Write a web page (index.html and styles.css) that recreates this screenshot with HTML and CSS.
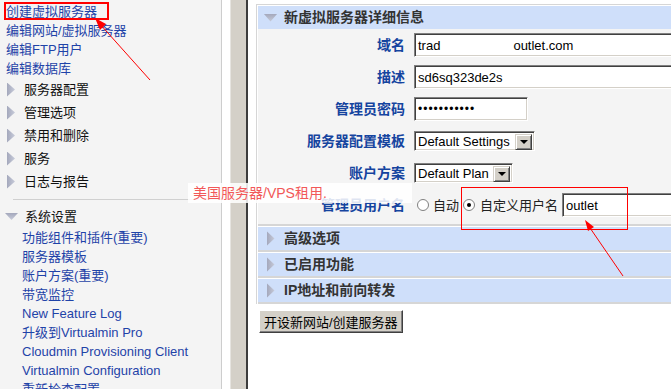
FILE: index.html
```html
<!DOCTYPE html>
<html lang="zh-CN">

<head>
  <meta charset="UTF-8">
  <meta name="viewport" content="width=device-width, initial-scale=1.0">
  <title>Virtualmin</title>
  <link rel="stylesheet" href="styles.css">
</head>

<body>
  <div class="frame">
    <div class="sidebar">
      <div class="links">
        <a href="#">创建虚拟服务器</a>
        <a href="#">编辑网站/虚拟服务器</a>
        <a href="#">编辑FTP用户</a>
        <a href="#">编辑数据库</a>
      </div>
      <ul class="cats">
        <li><span class="tri-r"></span>服务器配置</li>
        <li><span class="tri-r"></span>管理选项</li>
        <li><span class="tri-r"></span>禁用和删除</li>
        <li><span class="tri-r"></span>服务</li>
        <li><span class="tri-r"></span>日志与报告</li>
      </ul>
      <div class="sep"></div>
      <div class="cat-open"><span class="tri-d"></span>系统设置</div>
      <div class="sublinks">
        <a href="#">功能组件和插件(重要)</a>
        <a href="#">服务器模板</a>
        <a href="#">账户方案(重要)</a>
        <a href="#">带宽监控</a>
        <a href="#">New Feature Log</a>
        <a href="#">升级到Virtualmin Pro</a>
        <a href="#">Cloudmin Provisioning Client</a>
        <a href="#">Virtualmin Configuration</a>
        <a href="#">重新检查配置</a>
      </div>
    </div>
    <div class="gutter"></div>
    <div class="splitter"></div>
    <div class="main">
      <div class="panel">
        <div class="sec">
          <div class="sec-head"><span class="ico"><span class="tri-d big"></span></span>新虚拟服务器详细信息</div>
          <div class="sec-body">
            <div class="row">
              <label>域名</label>
              <div class="field wide">trad<span class="hidden-part"></span>outlet.com</div>
            </div>
            <div class="row">
              <label>描述</label>
              <div class="field wide">sd6sq323de2s</div>
            </div>
            <div class="row">
              <label>管理员密码</label>
              <div class="field pass">•••••••••••</div>
            </div>
            <div class="row">
              <label>服务器配置模板</label>
              <div class="select sel-tpl">Default Settings<span class="drop"></span></div>
            </div>
            <div class="row">
              <label>账户方案</label>
              <div class="select sel-plan">Default Plan<span class="drop"></span></div>
            </div>
            <div class="row">
              <label>管理员用户名</label>
              <span class="radio first"></span>
              <span class="opt">自动</span>
              <span class="radio on"></span>
              <span class="opt">自定义用户名</span>
              <div class="field user">outlet</div>
            </div>
          </div>
        </div>
        <div class="sec">
          <div class="sec-head"><span class="ico"><span class="tri-r big"></span></span>高级选项</div>
        </div>
        <div class="sec">
          <div class="sec-head"><span class="ico"><span class="tri-r big"></span></span>已启用功能</div>
        </div>
        <div class="sec">
          <div class="sec-head"><span class="ico"><span class="tri-r big"></span></span>IP地址和前向转发</div>
        </div>
      </div>
      <button class="btn">开设新网站/创建服务器</button>
    </div>
  </div>

  <!-- 截图上的标注 -->
  <div class="watermark">美国服务器/VPS租用.</div>
  <div class="mark mark-1"></div>
  <div class="mark mark-2"></div>
  <svg class="arrows" width="671" height="389" viewBox="0 0 671 389">
    <line x1="150" y1="80" x2="99" y2="23" />
    <polygon points="95,18 106,24 100,30" />
    <line x1="623" y1="276" x2="588" y2="225" />
    <polygon points="585,220 594,227 588,231" />
  </svg>
</body>

</html>
```

FILE: styles.css
```css
* {
  padding: 0;
  margin: 0;
  box-sizing: border-box;
}

body {
  width: 671px;
  height: 389px;
  overflow: hidden;
  position: relative;
  background: #fff;
  font: 13px/19px "Liberation Sans", "Noto Sans CJK SC", sans-serif;
  color: #111;
}

a {
  color: #1f43a8;
  text-decoration: none;
  display: block;
}

.frame {
  display: flex;
  height: 389px;
}

/* 左侧菜单 */
.sidebar {
  width: 222px;
  flex: none;
  background: #f4f4f4;
  border-right: 1px solid #cdcdcd;
  padding-top: 2px;
}

.links {
  padding-left: 6px;
}

.cats {
  list-style: none;
}

.cats li {
  height: 23px;
  display: flex;
  align-items: center;
  padding-left: 7px;
}

.tri-r {
  display: inline-block;
  width: 8px;
  height: 14px;
  margin-right: 9px;
  clip-path: polygon(0 0, 100% 50%, 0 100%);
  background: linear-gradient(90deg, #a4a8bc, #c8ccda);
}

.tri-d {
  display: inline-block;
  width: 13px;
  height: 7px;
  margin-right: 7px;
  clip-path: polygon(0 0, 100% 0, 50% 100%);
  background: linear-gradient(#a4a8bc, #c8ccda);
}

.sep {
  height: 1px;
  background: #d0d0d0;
  margin: 6px 0 5px 13px;
}

.cat-open {
  height: 23px;
  display: flex;
  align-items: center;
  padding-left: 5px;
}

.sublinks {
  padding-left: 22px;
}

.gutter {
  width: 8px;
  flex: none;
}

.splitter {
  width: 18px;
  flex: none;
  background: #d4d0c8;
  border-left: 1px solid #e6e4e0;
  border-right: 2px solid #3c3c3c;
}

/* 右侧表单 */
.main {
  flex: 1;
  min-width: 0;
  overflow: hidden;
  padding: 4px 0 0 8px;
}

.panel {
  width: 520px;
  border: 1px solid #d6d6d6;
  border-bottom: none;
  border-right: none;
  padding: 1px 0 0 1px;
}

.sec {
  border-bottom: 2px solid #d6d6d6;
  margin-bottom: 1px;
}

.sec:last-child {
  margin-bottom: 0;
}

.sec-head {
  height: 23px;
  background: #cfdffa;
  display: flex;
  align-items: center;
  font-weight: bold;
  font-size: 14px;
  color: #333;
}

.sec-head .ico {
  width: 25px;
  display: flex;
  justify-content: center;
  margin-right: 1px;
}

.tri-d.big {
  width: 14px;
  height: 8px;
  margin: 0;
}

.tri-r.big {
  width: 8px;
  height: 15px;
  margin: 0;
}

.sec-body {
  background: #f4f4f4;
  padding-bottom: 3px;
}

.row {
  height: 32px;
  display: flex;
  align-items: center;
}

.row label {
  width: 147px;
  margin-right: 9px;
  text-align: right;
  font-weight: bold;
  font-size: 14px;
  color: #15449f;
}

.field,
.select {
  background: #fff;
  border: 1px solid;
  border-color: #808080 #fff #fff #808080;
  box-shadow: inset 1px 1px #404040, inset -1px -1px #d4d0c8;
  display: flex;
  align-items: center;
  padding: 0 3px;
  white-space: nowrap;
  color: #000;
}

.field {
  height: 24px;
}

.wide {
  width: 300px;
}

.hidden-part {
  display: inline-block;
  width: 73px;
}

.pass {
  width: 114px;
  letter-spacing: 1px;
  font-size: 12px;
}

.select {
  height: 20px;
  position: relative;
  padding-right: 20px;
}

.sel-tpl {
  width: 121px;
}

.sel-plan {
  width: 99px;
}

.drop {
  position: absolute;
  right: 2px;
  top: 2px;
  width: 17px;
  height: 16px;
  background: #d4d0c8;
  border: 1px solid;
  border-color: #d4d0c8 #404040 #404040 #d4d0c8;
  box-shadow: inset 1px 1px #fff, inset -1px -1px #808080;
}

.drop::after {
  content: "";
  position: absolute;
  left: 4px;
  top: 5px;
  border-top: 4px solid #000;
  border-left: 4px solid transparent;
  border-right: 4px solid transparent;
}

.radio {
  width: 12px;
  height: 12px;
  border-radius: 50%;
  background: #fff;
  border: 1px solid #808080;
  position: relative;
  margin-right: 4px;
}

.radio.first {
  margin-left: 3px;
}

.radio.on::after {
  content: "";
  position: absolute;
  left: 3px;
  top: 3px;
  width: 4px;
  height: 4px;
  border-radius: 50%;
  background: #000;
}

.opt {
  margin-right: 4px;
  color: #222;
}

.opt + .radio {
  margin-right: 5px;
}

.user {
  width: 200px;
}

.btn {
  margin: 6px 0 0 3px;
  height: 23px;
  padding: 0 4px;
  font: 13px "Liberation Sans", "Noto Sans CJK SC", sans-serif;
  color: #000;
  background: #d4d0c8;
  border: 1px solid;
  border-color: #fff #404040 #404040 #fff;
  box-shadow: inset -1px -1px #808080;
}

/* 标注 */
.watermark {
  position: absolute;
  left: 188px;
  top: 183px;
  width: 224px;
  height: 20px;
  padding-left: 5px;
  background: rgba(255, 255, 255, .86);
  color: #f25858;
  font-size: 14px;
  line-height: 20px;
}

.mark {
  position: absolute;
  border: 2px solid #f00;
}

.mark-1 {
  left: 4px;
  top: 2px;
  width: 105px;
  height: 18px;
}

.mark-2 {
  left: 461px;
  top: 187px;
  width: 167px;
  height: 43px;
  border-width: 1px;
}

.arrows {
  position: absolute;
  left: 0;
  top: 0;
  pointer-events: none;
}

.arrows line {
  stroke: #f00;
  stroke-width: 1;
}

.arrows polygon {
  fill: #f00;
}
```
